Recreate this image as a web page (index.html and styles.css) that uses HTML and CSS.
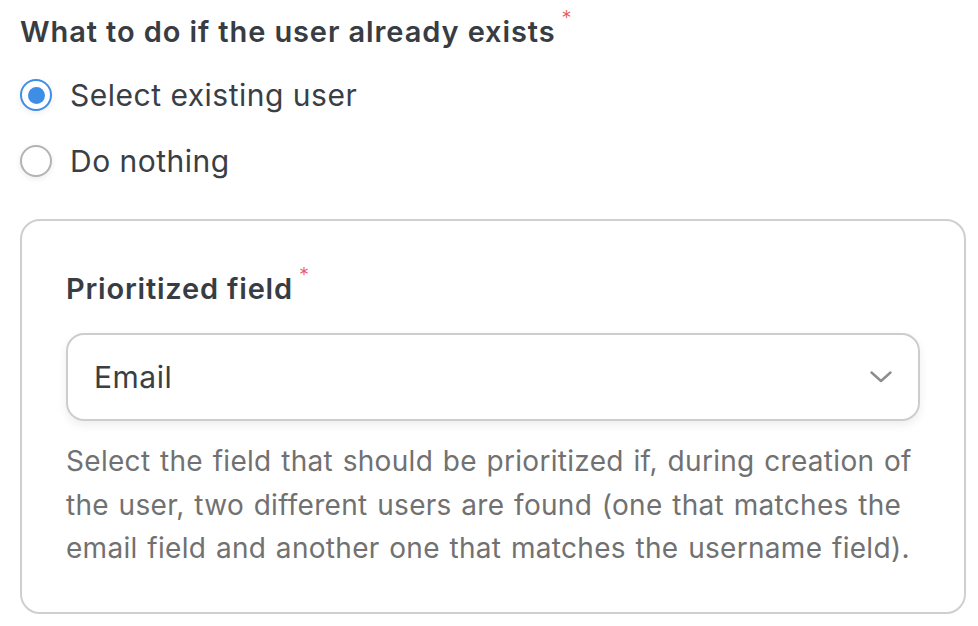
FILE: index.html
```html
<!DOCTYPE html>
<html>
<head>
<meta charset="utf-8">
<link rel="stylesheet" href="styles.css">
</head>
<body>
<div class="page">
  <div class="label">What to do if the user already exists<span class="req">*</span></div>
  <div class="radios">
    <label class="radio"><span class="dot checked"></span><span class="rtext">Select existing user</span></label>
    <label class="radio"><span class="dot"></span><span class="rtext">Do nothing</span></label>
  </div>
  <div class="card">
    <div class="label inner">Prioritized field<span class="req">*</span></div>
    <div class="select">
      <span class="value">Email</span>
      <svg class="chev" width="24" height="14" viewBox="0 0 24 14"><path d="M2.5 2.5 L12 11 L21.5 2.5" fill="none" stroke="#8c8c8c" stroke-width="2.4" stroke-linecap="round" stroke-linejoin="round"/></svg>
    </div>
    <p class="help">Select the field that should be prioritized if, during creation of the user, two different users are found (one that matches the email field and another one that matches the username field).</p>
  </div>
</div>
</body>
</html>
```
FILE: styles.css
```css
html, body { margin: 0; padding: 0; background: #fff; }
body { font-family: Inter, "Noto Sans", sans-serif; color: #3a3e45; }
.page { padding: 13px 12px 0 20px; }
.label { display: block; font-size: 29px; font-weight: 600; letter-spacing: 0.9px; color: #383c43; line-height: 38px; }
.req { color: #ea5a57; font-size: 20px; font-weight: 300; line-height: 0; position: relative; top: -17px; margin-left: 6px; letter-spacing: 0; }
.radios { display: flex; flex-direction: column; gap: 30px; margin-top: 26px; }
.radio { display: flex; align-items: center; gap: 18px; height: 36px; }
.dot { width: 28px; height: 28px; border-radius: 50%; border: 2px solid #b3b3b3; box-sizing: content-box; background: #fff; box-shadow: 0 2px 6px rgba(0,0,0,0.08); display: flex; align-items: center; justify-content: center; }
.dot.checked { border-color: #3f8ee6; }
.dot.checked::after { content: ""; width: 17px; height: 17px; border-radius: 50%; background: #3f8ee6; }
.rtext { font-size: 30px; letter-spacing: 0.5px; color: #3a3e45; }
.card { margin-top: 40px; border: 2px solid #cfcfcf; border-radius: 20px; padding: 49px 44px 41px 44px; width: 946px; box-sizing: border-box; }
.inner { font-size: 29px; letter-spacing: 0.8px; }
.select { margin-top: 25px; height: 88px; border: 2px solid #cdcdcd; border-radius: 18px; box-sizing: border-box; display: flex; align-items: center; justify-content: space-between; padding: 0 25px 0 26px; box-shadow: 0 4px 10px rgba(0,0,0,0.07); }
.value { font-size: 30px; letter-spacing: 0.5px; color: #3a3e45; }
.help { margin: 19px 0 0 0; font-size: 28px; letter-spacing: 0.3px; word-spacing: 1.5px; line-height: 43.5px; color: #717171; }
```
